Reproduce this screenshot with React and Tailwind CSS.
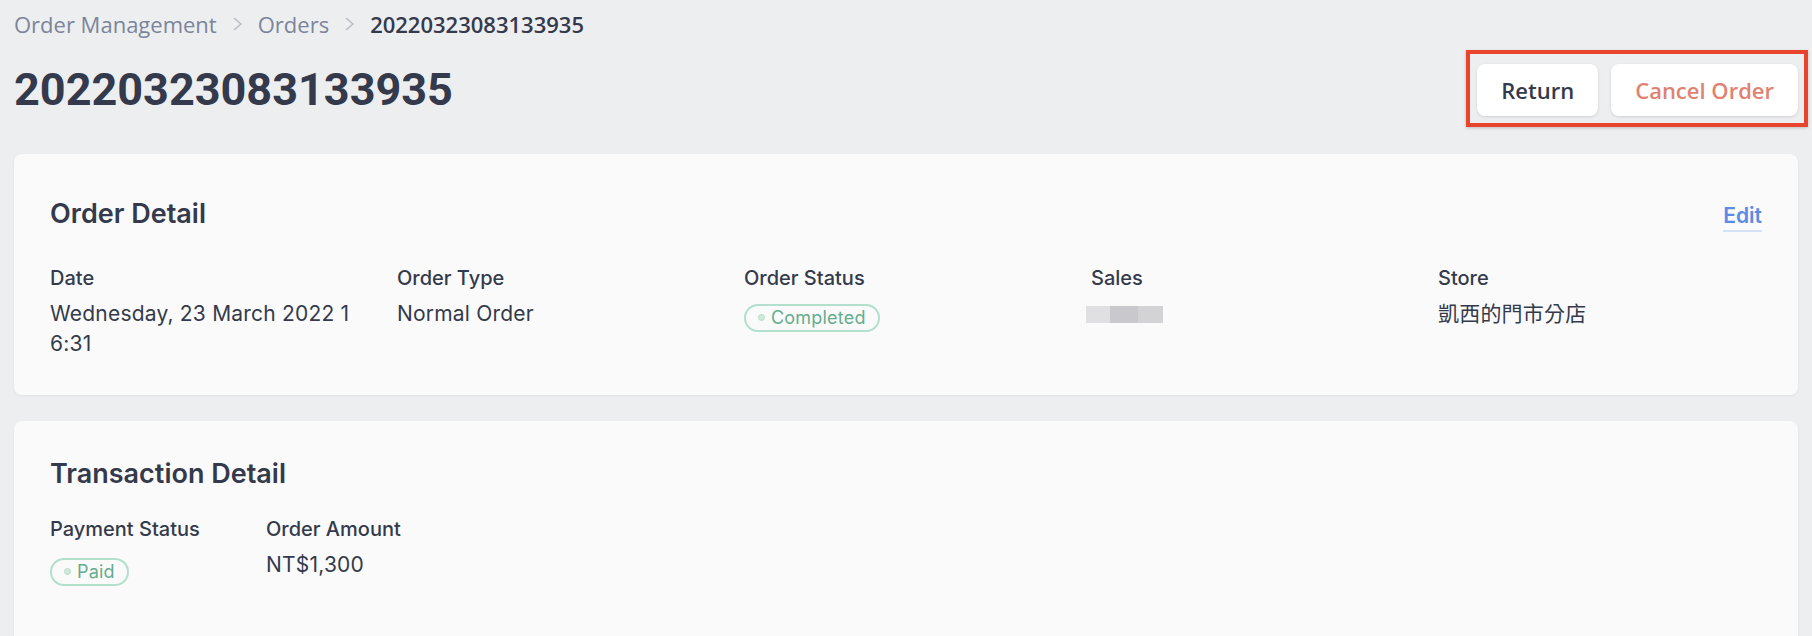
const openSans = "font-['Open_Sans',sans-serif]";
const inter = "font-['Inter','Noto_Sans_CJK_TC',sans-serif]";

function Chevron() {
  return (
    <svg width="10" height="14" viewBox="0 0 10 14" className="ml-[16px] mr-[15px] shrink-0" fill="none">
      <path d="M1.5 1.5 L8 7 L1.5 12.5" stroke="#b6bbc6" strokeWidth="1.6" strokeLinecap="round" strokeLinejoin="round" />
    </svg>
  );
}

function Badge({ children }) {
  return (
    <span className="inline-flex items-center h-[28px] px-[12px] gap-[6px] rounded-full border-2 border-[#b2e0cc] text-[#64ad8d] text-[18px] leading-none tracking-[0.2px]">
      <span className="w-[7px] h-[7px] rounded-full bg-[#cfe9dd] border border-[#b8dcca]" />
      {children}
    </span>
  );
}

function Field({ label, children }) {
  return (
    <div className="min-w-0 pr-[22px]">
      <div className="text-[20px] leading-[28px] font-medium text-[#343a4b]">{label}</div>
      <div className="mt-[7px] text-[21px] leading-[30px] tracking-[0.2px] text-[#343a4b] break-all">{children}</div>
    </div>
  );
}

export default function App() {
  return (
    <div className={`h-[636px] overflow-hidden bg-[#edeef0] px-[14px] pt-[9px] ${inter}`}>
      {/* Breadcrumb */}
      <nav className={`flex items-center h-[30px] text-[22px] ${openSans}`}>
        <span className="text-[#7b859a]">Order Management</span>
        <Chevron />
        <span className="text-[#7b859a]">Orders</span>
        <Chevron />
        <span className="font-semibold text-[#343a4b]">20220323083133935</span>
      </nav>

      {/* Header */}
      <div className="mt-[25px] flex items-center justify-between h-[52px]">
        <h1 className="text-[45px] leading-[52px] font-bold text-[#343a4b] font-['Roboto',sans-serif]">
          20220323083133935
        </h1>
        <div className="relative flex items-center gap-[13px]">
          <div className="absolute -left-[11px] -right-[10px] -top-[14px] -bottom-[11px] border-[4px] border-[#e8452c] shadow-[0_1px_3px_rgba(0,0,0,0.2)] pointer-events-none" />
          <button className={`h-[52px] px-[24px] rounded-[8px] bg-white shadow-[0_1px_3px_rgba(0,0,0,0.12)] text-[22px] font-semibold text-[#343a4b] ${openSans}`}>
            Return
          </button>
          <button className={`h-[52px] px-[24px] rounded-[8px] bg-white shadow-[0_1px_3px_rgba(0,0,0,0.12)] text-[22px] font-semibold text-[#e08272] ${openSans}`}>
            Cancel Order
          </button>
        </div>
      </div>

      {/* Order Detail */}
      <section className="mt-[38px] bg-[#fafafa] rounded-[8px] shadow-[0_1px_3px_rgba(0,0,0,0.06)] px-[36px] pt-[40px] pb-[36px]">
        <div className="flex items-center justify-between h-[40px]">
          <h2 className="text-[27px] font-semibold text-[#343a4b]">Order Detail</h2>
          <a className="text-[21px] font-semibold text-[#5b8be5] leading-[28px] border-b-2 border-[#d6e3f6] mt-[6px]">Edit</a>
        </div>
        <div className="mt-[30px] grid grid-cols-5 gap-x-[23px]">
          <Field label="Date">Wednesday, 23 March 2022 16:31</Field>
          <Field label="Order Type">Normal Order</Field>
          <Field label="Order Status">
            <Badge>Completed</Badge>
          </Field>
          <Field label="Sales">
            <div className="flex h-[30px] items-center -ml-[5px]">
              <span className="w-[24px] h-[17px] bg-[#e0e0e3]" />
              <span className="w-[28px] h-[17px] bg-[#c9c9cd]" />
              <span className="w-[25px] h-[17px] bg-[#d3d3d6]" />
            </div>
          </Field>
          <Field label="Store">凱西的門市分店</Field>
        </div>
      </section>

      {/* Transaction Detail */}
      <section className="mt-[26px] bg-[#fafafa] rounded-[8px] shadow-[0_1px_3px_rgba(0,0,0,0.06)] px-[36px] pt-[33px] pb-[60px]">
        <div className="flex items-center h-[40px]">
          <h2 className="text-[27px] font-semibold text-[#343a4b]">Transaction Detail</h2>
        </div>
        <div className="mt-[21px] flex">
          <div className="w-[216px]">
            <div className="text-[20px] leading-[28px] font-medium text-[#343a4b]">Payment Status</div>
            <div className="mt-[14px]">
              <Badge>Paid</Badge>
            </div>
          </div>
          <Field label="Order Amount">NT$1,300</Field>
        </div>
      </section>
    </div>
  );
}
